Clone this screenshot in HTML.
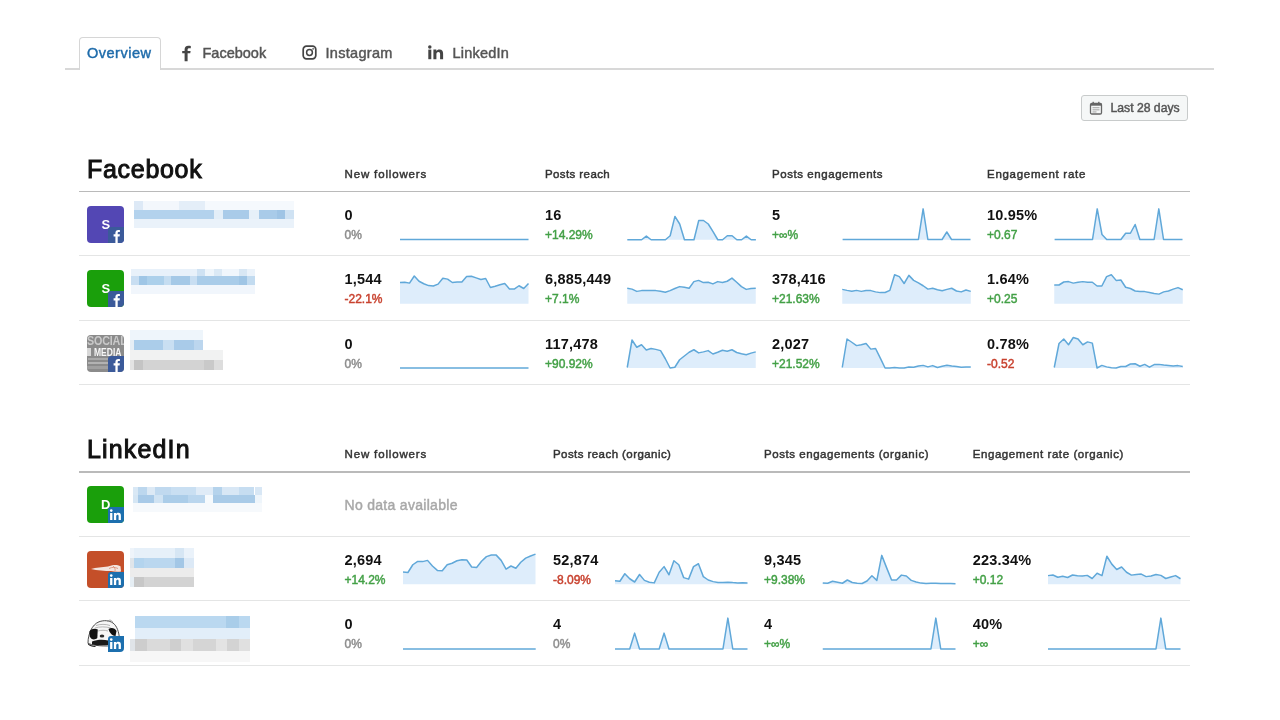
<!DOCTYPE html><html><head><meta charset="utf-8"><style>html,body{margin:0;padding:0;background:#fff;width:1280px;height:720px;overflow:hidden;position:relative;font-family:"Liberation Sans", sans-serif}#w{position:absolute;left:0;top:0;width:1280px;height:720px;will-change:transform}</style></head><body><div id="w">
<div style="position:absolute;left:65px;top:68.25px;width:1149px;height:1.5px;background:#d8d8d8;"></div>
<div style="position:absolute;left:79px;top:37px;width:79.5px;height:32px;border:1.5px solid #d6d6d6;border-bottom:none;border-radius:4px 4px 0 0;background:#fff"></div>
<div style="position:absolute;left:87.00px;top:45.73px;font-size:14.5px;line-height:14.5px;font-weight:400;color:#1f6cab;letter-spacing:0.5px;white-space:nowrap;-webkit-text-stroke:0.45px #1f6cab;">Overview</div>
<svg style="position:absolute;left:180px;top:45px" width="12" height="17" viewBox="0 0 12 17"><path d="M4.6 16.2V8.3H2.2V6.1h2.4V4.6C4.6 2.1 5.9 0.8 8.3 0.8c.9 0 1.9.1 2.5.2v2.3H9.2c-1.1 0-1.6.5-1.6 1.5v1.3h3l-.35 2.2H7.6v7.9z" fill="#454545"/></svg>
<div style="position:absolute;left:202.50px;top:45.73px;font-size:14.5px;line-height:14.5px;font-weight:400;color:#555;letter-spacing:0px;white-space:nowrap;-webkit-text-stroke:0.45px #555;">Facebook</div>
<svg style="position:absolute;left:301.5px;top:45px" width="15" height="15" viewBox="0 0 15 15"><rect x="1.2" y="1.2" width="12.6" height="12.6" rx="3.3" fill="none" stroke="#444" stroke-width="1.7"/><circle cx="7.5" cy="7.5" r="2.9" fill="none" stroke="#444" stroke-width="1.5"/><circle cx="11.1" cy="3.9" r="0.8" fill="#444"/></svg>
<div style="position:absolute;left:325.50px;top:45.73px;font-size:14.5px;line-height:14.5px;font-weight:400;color:#555;letter-spacing:0.3px;white-space:nowrap;-webkit-text-stroke:0.45px #555;">Instagram</div>
<svg style="position:absolute;left:428px;top:45px" width="16" height="15" viewBox="0 0 16 15"><rect x="0.3" y="4.6" width="3" height="9.6" fill="#444"/><circle cx="1.8" cy="1.9" r="1.75" fill="#444"/><path d="M5.4 4.6h2.9v1.4C8.8 5.1 10 4.4 11.5 4.4c2.8 0 3.6 1.8 3.6 4.3v5.5h-3V9.3c0-1.2-.2-2.4-1.7-2.4s-2 1.1-2 2.4v4.9h-3z" fill="#444"/></svg>
<div style="position:absolute;left:452.50px;top:45.73px;font-size:14.5px;line-height:14.5px;font-weight:400;color:#555;letter-spacing:0.2px;white-space:nowrap;-webkit-text-stroke:0.45px #555;">LinkedIn</div>
<div style="position:absolute;left:1081px;top:95px;width:105px;height:23.5px;border:1.5px solid #c8cbcb;border-radius:3px;background:#f5f7f7"></div>
<svg style="position:absolute;left:1089px;top:101px" width="14" height="14" viewBox="0 0 14 14"><rect x="1.5" y="2.5" width="11" height="10.5" rx="1.3" fill="none" stroke="#666" stroke-width="1.3"/><rect x="1.5" y="2.5" width="11" height="2.2" fill="#666"/><rect x="3.5" y="0.8" width="1.4" height="2.6" fill="#666"/><rect x="9.1" y="0.8" width="1.4" height="2.6" fill="#666"/><rect x="3.5" y="6.3" width="7" height="0.9" fill="#999"/><rect x="3.5" y="8.4" width="7" height="0.9" fill="#999"/><rect x="3.5" y="10.5" width="4" height="0.9" fill="#999"/></svg>
<div style="position:absolute;left:1110.50px;top:102.17px;font-size:12.2px;line-height:12.2px;font-weight:400;color:#555;letter-spacing:0px;white-space:nowrap;-webkit-text-stroke:0.45px #555;">Last 28 days</div>
<div style="position:absolute;left:87.00px;top:157.34px;font-size:25px;line-height:25px;font-weight:500;color:#111;letter-spacing:0.7px;white-space:nowrap;-webkit-text-stroke:1.0px #111;">Facebook</div>
<div style="position:absolute;left:79px;top:190.75px;width:1111px;height:1.5px;background:#bababa;"></div>
<div style="position:absolute;left:344.50px;top:168.87px;font-size:11.5px;line-height:11.5px;font-weight:400;color:#333;letter-spacing:0.85px;white-space:nowrap;-webkit-text-stroke:0.45px #333;">New followers</div>
<div style="position:absolute;left:545.00px;top:168.87px;font-size:11.5px;line-height:11.5px;font-weight:400;color:#333;letter-spacing:0.4px;white-space:nowrap;-webkit-text-stroke:0.45px #333;">Posts reach</div>
<div style="position:absolute;left:772.00px;top:168.87px;font-size:11.5px;line-height:11.5px;font-weight:400;color:#333;letter-spacing:0.56px;white-space:nowrap;-webkit-text-stroke:0.45px #333;">Posts engagements</div>
<div style="position:absolute;left:987.00px;top:168.87px;font-size:11.5px;line-height:11.5px;font-weight:400;color:#333;letter-spacing:0.72px;white-space:nowrap;-webkit-text-stroke:0.45px #333;">Engagement rate</div>
<div style="position:absolute;left:87.00px;top:437.24px;font-size:25px;line-height:25px;font-weight:500;color:#111;letter-spacing:1.15px;white-space:nowrap;-webkit-text-stroke:1.0px #111;">LinkedIn</div>
<div style="position:absolute;left:79px;top:471.25px;width:1111px;height:1.5px;background:#bababa;"></div>
<div style="position:absolute;left:344.50px;top:449.02px;font-size:11.5px;line-height:11.5px;font-weight:400;color:#333;letter-spacing:0.85px;white-space:nowrap;-webkit-text-stroke:0.45px #333;">New followers</div>
<div style="position:absolute;left:553.00px;top:449.02px;font-size:11.5px;line-height:11.5px;font-weight:400;color:#333;letter-spacing:0.43px;white-space:nowrap;-webkit-text-stroke:0.45px #333;">Posts reach (organic)</div>
<div style="position:absolute;left:764.00px;top:449.02px;font-size:11.5px;line-height:11.5px;font-weight:400;color:#333;letter-spacing:0.55px;white-space:nowrap;-webkit-text-stroke:0.45px #333;">Posts engagements (organic)</div>
<div style="position:absolute;left:972.70px;top:449.02px;font-size:11.5px;line-height:11.5px;font-weight:400;color:#333;letter-spacing:0.58px;white-space:nowrap;-webkit-text-stroke:0.45px #333;">Engagement rate (organic)</div>
<div style="position:absolute;left:79px;top:255.3px;width:1111px;height:1.2px;background:#e4e5e5;"></div>
<div style="position:absolute;left:79px;top:319.9px;width:1111px;height:1.2px;background:#e4e5e5;"></div>
<div style="position:absolute;left:79px;top:383.9px;width:1111px;height:1.2px;background:#e4e5e5;"></div>
<div style="position:absolute;left:79px;top:535.65px;width:1111px;height:1.2px;background:#e4e5e5;"></div>
<div style="position:absolute;left:79px;top:599.9px;width:1111px;height:1.2px;background:#e4e5e5;"></div>
<div style="position:absolute;left:79px;top:664.6px;width:1111px;height:1.2px;background:#e4e5e5;"></div>
<div style="position:absolute;left:344.50px;top:207.93px;font-size:14.5px;line-height:14.5px;font-weight:700;color:#111;letter-spacing:0.2px;white-space:nowrap;">0</div>
<div style="position:absolute;left:344.50px;top:228.94px;font-size:12px;line-height:12px;font-weight:400;color:#8c8c8c;letter-spacing:0px;white-space:nowrap;-webkit-text-stroke:0.45px #8c8c8c;">0%</div>
<div style="position:absolute;left:545.00px;top:207.93px;font-size:14.5px;line-height:14.5px;font-weight:700;color:#111;letter-spacing:0.2px;white-space:nowrap;">16</div>
<div style="position:absolute;left:545.00px;top:228.94px;font-size:12px;line-height:12px;font-weight:400;color:#43a046;letter-spacing:0px;white-space:nowrap;-webkit-text-stroke:0.45px #43a046;">+14.29%</div>
<div style="position:absolute;left:772.00px;top:207.93px;font-size:14.5px;line-height:14.5px;font-weight:700;color:#111;letter-spacing:0.2px;white-space:nowrap;">5</div>
<div style="position:absolute;left:772.00px;top:228.94px;font-size:12px;line-height:12px;font-weight:400;color:#43a046;letter-spacing:0px;white-space:nowrap;-webkit-text-stroke:0.45px #43a046;">+∞%</div>
<div style="position:absolute;left:987.00px;top:207.93px;font-size:14.5px;line-height:14.5px;font-weight:700;color:#111;letter-spacing:0.2px;white-space:nowrap;">10.95%</div>
<div style="position:absolute;left:987.00px;top:228.94px;font-size:12px;line-height:12px;font-weight:400;color:#43a046;letter-spacing:0px;white-space:nowrap;-webkit-text-stroke:0.45px #43a046;">+0.67</div>
<div style="position:absolute;left:344.50px;top:272.43px;font-size:14.5px;line-height:14.5px;font-weight:700;color:#111;letter-spacing:0.2px;white-space:nowrap;">1,544</div>
<div style="position:absolute;left:344.50px;top:293.44px;font-size:12px;line-height:12px;font-weight:400;color:#c8412e;letter-spacing:0px;white-space:nowrap;-webkit-text-stroke:0.45px #c8412e;">-22.1%</div>
<div style="position:absolute;left:545.00px;top:272.43px;font-size:14.5px;line-height:14.5px;font-weight:700;color:#111;letter-spacing:0.2px;white-space:nowrap;">6,885,449</div>
<div style="position:absolute;left:545.00px;top:293.44px;font-size:12px;line-height:12px;font-weight:400;color:#43a046;letter-spacing:0px;white-space:nowrap;-webkit-text-stroke:0.45px #43a046;">+7.1%</div>
<div style="position:absolute;left:772.00px;top:272.43px;font-size:14.5px;line-height:14.5px;font-weight:700;color:#111;letter-spacing:0.2px;white-space:nowrap;">378,416</div>
<div style="position:absolute;left:772.00px;top:293.44px;font-size:12px;line-height:12px;font-weight:400;color:#43a046;letter-spacing:0px;white-space:nowrap;-webkit-text-stroke:0.45px #43a046;">+21.63%</div>
<div style="position:absolute;left:987.00px;top:272.43px;font-size:14.5px;line-height:14.5px;font-weight:700;color:#111;letter-spacing:0.2px;white-space:nowrap;">1.64%</div>
<div style="position:absolute;left:987.00px;top:293.44px;font-size:12px;line-height:12px;font-weight:400;color:#43a046;letter-spacing:0px;white-space:nowrap;-webkit-text-stroke:0.45px #43a046;">+0.25</div>
<div style="position:absolute;left:344.50px;top:336.93px;font-size:14.5px;line-height:14.5px;font-weight:700;color:#111;letter-spacing:0.2px;white-space:nowrap;">0</div>
<div style="position:absolute;left:344.50px;top:357.94px;font-size:12px;line-height:12px;font-weight:400;color:#8c8c8c;letter-spacing:0px;white-space:nowrap;-webkit-text-stroke:0.45px #8c8c8c;">0%</div>
<div style="position:absolute;left:545.00px;top:336.93px;font-size:14.5px;line-height:14.5px;font-weight:700;color:#111;letter-spacing:0.2px;white-space:nowrap;">117,478</div>
<div style="position:absolute;left:545.00px;top:357.94px;font-size:12px;line-height:12px;font-weight:400;color:#43a046;letter-spacing:0px;white-space:nowrap;-webkit-text-stroke:0.45px #43a046;">+90.92%</div>
<div style="position:absolute;left:772.00px;top:336.93px;font-size:14.5px;line-height:14.5px;font-weight:700;color:#111;letter-spacing:0.2px;white-space:nowrap;">2,027</div>
<div style="position:absolute;left:772.00px;top:357.94px;font-size:12px;line-height:12px;font-weight:400;color:#43a046;letter-spacing:0px;white-space:nowrap;-webkit-text-stroke:0.45px #43a046;">+21.52%</div>
<div style="position:absolute;left:987.00px;top:336.93px;font-size:14.5px;line-height:14.5px;font-weight:700;color:#111;letter-spacing:0.2px;white-space:nowrap;">0.78%</div>
<div style="position:absolute;left:987.00px;top:357.94px;font-size:12px;line-height:12px;font-weight:400;color:#c8412e;letter-spacing:0px;white-space:nowrap;-webkit-text-stroke:0.45px #c8412e;">-0.52</div>
<div style="position:absolute;left:344.50px;top:497.85px;font-size:14px;line-height:14px;font-weight:400;color:#a8a8a8;letter-spacing:0.3px;white-space:nowrap;-webkit-text-stroke:0.45px #a8a8a8;">No data available</div>
<div style="position:absolute;left:344.50px;top:552.68px;font-size:14.5px;line-height:14.5px;font-weight:700;color:#111;letter-spacing:0.2px;white-space:nowrap;">2,694</div>
<div style="position:absolute;left:344.50px;top:573.69px;font-size:12px;line-height:12px;font-weight:400;color:#43a046;letter-spacing:0px;white-space:nowrap;-webkit-text-stroke:0.45px #43a046;">+14.2%</div>
<div style="position:absolute;left:553.00px;top:552.68px;font-size:14.5px;line-height:14.5px;font-weight:700;color:#111;letter-spacing:0.2px;white-space:nowrap;">52,874</div>
<div style="position:absolute;left:553.00px;top:573.69px;font-size:12px;line-height:12px;font-weight:400;color:#c8412e;letter-spacing:0px;white-space:nowrap;-webkit-text-stroke:0.45px #c8412e;">-8.09%</div>
<div style="position:absolute;left:764.00px;top:552.68px;font-size:14.5px;line-height:14.5px;font-weight:700;color:#111;letter-spacing:0.2px;white-space:nowrap;">9,345</div>
<div style="position:absolute;left:764.00px;top:573.69px;font-size:12px;line-height:12px;font-weight:400;color:#43a046;letter-spacing:0px;white-space:nowrap;-webkit-text-stroke:0.45px #43a046;">+9.38%</div>
<div style="position:absolute;left:972.70px;top:552.68px;font-size:14.5px;line-height:14.5px;font-weight:700;color:#111;letter-spacing:0.2px;white-space:nowrap;">223.34%</div>
<div style="position:absolute;left:972.70px;top:573.69px;font-size:12px;line-height:12px;font-weight:400;color:#43a046;letter-spacing:0px;white-space:nowrap;-webkit-text-stroke:0.45px #43a046;">+0.12</div>
<div style="position:absolute;left:344.50px;top:617.18px;font-size:14.5px;line-height:14.5px;font-weight:700;color:#111;letter-spacing:0.2px;white-space:nowrap;">0</div>
<div style="position:absolute;left:344.50px;top:638.19px;font-size:12px;line-height:12px;font-weight:400;color:#8c8c8c;letter-spacing:0px;white-space:nowrap;-webkit-text-stroke:0.45px #8c8c8c;">0%</div>
<div style="position:absolute;left:553.00px;top:617.18px;font-size:14.5px;line-height:14.5px;font-weight:700;color:#111;letter-spacing:0.2px;white-space:nowrap;">4</div>
<div style="position:absolute;left:553.00px;top:638.19px;font-size:12px;line-height:12px;font-weight:400;color:#8c8c8c;letter-spacing:0px;white-space:nowrap;-webkit-text-stroke:0.45px #8c8c8c;">0%</div>
<div style="position:absolute;left:764.00px;top:617.18px;font-size:14.5px;line-height:14.5px;font-weight:700;color:#111;letter-spacing:0.2px;white-space:nowrap;">4</div>
<div style="position:absolute;left:764.00px;top:638.19px;font-size:12px;line-height:12px;font-weight:400;color:#43a046;letter-spacing:0px;white-space:nowrap;-webkit-text-stroke:0.45px #43a046;">+∞%</div>
<div style="position:absolute;left:972.70px;top:617.18px;font-size:14.5px;line-height:14.5px;font-weight:700;color:#111;letter-spacing:0.2px;white-space:nowrap;">40%</div>
<div style="position:absolute;left:972.70px;top:638.19px;font-size:12px;line-height:12px;font-weight:400;color:#43a046;letter-spacing:0px;white-space:nowrap;-webkit-text-stroke:0.45px #43a046;">+∞</div>
<svg style="position:absolute;left:0;top:0" width="1280" height="720" viewBox="0 0 1280 720">
<path d="M400.00,239.75 L400.00,239.50 L404.76,239.50 L409.52,239.50 L414.28,239.50 L419.04,239.50 L423.80,239.50 L428.56,239.50 L433.31,239.50 L438.07,239.50 L442.83,239.50 L447.59,239.50 L452.35,239.50 L457.11,239.50 L461.87,239.50 L466.63,239.50 L471.39,239.50 L476.15,239.50 L480.91,239.50 L485.67,239.50 L490.43,239.50 L495.19,239.50 L499.94,239.50 L504.70,239.50 L509.46,239.50 L514.22,239.50 L518.98,239.50 L523.74,239.50 L528.50,239.50 L528.50,239.75 Z" fill="#deedfb"/>
<polyline points="400.00,239.50 404.76,239.50 409.52,239.50 414.28,239.50 419.04,239.50 423.80,239.50 428.56,239.50 433.31,239.50 438.07,239.50 442.83,239.50 447.59,239.50 452.35,239.50 457.11,239.50 461.87,239.50 466.63,239.50 471.39,239.50 476.15,239.50 480.91,239.50 485.67,239.50 490.43,239.50 495.19,239.50 499.94,239.50 504.70,239.50 509.46,239.50 514.22,239.50 518.98,239.50 523.74,239.50 528.50,239.50" fill="none" stroke="#60a8d9" stroke-width="1.5" stroke-linejoin="round"/>
<path d="M627.30,239.75 L627.30,239.75 L632.06,239.75 L636.83,239.75 L641.59,239.75 L646.35,236.10 L651.11,239.75 L655.88,239.75 L660.64,239.75 L665.40,239.75 L670.17,235.74 L674.93,216.41 L679.69,224.02 L684.46,239.75 L689.22,239.75 L693.98,239.75 L698.74,220.51 L703.51,220.51 L708.27,224.02 L713.03,231.64 L717.80,239.75 L722.56,239.75 L727.32,235.74 L732.09,235.74 L736.85,239.75 L741.61,239.75 L746.37,236.10 L751.14,239.75 L755.90,239.75 L755.90,239.75 Z" fill="#deedfb"/>
<polyline points="627.30,239.75 632.06,239.75 636.83,239.75 641.59,239.75 646.35,236.10 651.11,239.75 655.88,239.75 660.64,239.75 665.40,239.75 670.17,235.74 674.93,216.41 679.69,224.02 684.46,239.75 689.22,239.75 693.98,239.75 698.74,220.51 703.51,220.51 708.27,224.02 713.03,231.64 717.80,239.75 722.56,239.75 727.32,235.74 732.09,235.74 736.85,239.75 741.61,239.75 746.37,236.10 751.14,239.75 755.90,239.75" fill="none" stroke="#60a8d9" stroke-width="1.5" stroke-linejoin="round"/>
<path d="M842.60,239.75 L842.60,239.50 L847.34,239.50 L852.07,239.50 L856.81,239.50 L861.55,239.50 L866.29,239.50 L871.02,239.50 L875.76,239.50 L880.50,239.50 L885.23,239.50 L889.97,239.50 L894.71,239.50 L899.44,239.50 L904.18,239.50 L908.92,239.50 L913.66,239.50 L918.39,239.50 L923.13,208.88 L927.87,239.50 L932.60,239.50 L937.34,239.50 L942.08,239.50 L946.81,232.00 L951.55,239.50 L956.29,239.50 L961.03,239.50 L965.76,239.50 L970.50,239.50 L970.50,239.75 Z" fill="#deedfb"/>
<polyline points="842.60,239.50 847.34,239.50 852.07,239.50 856.81,239.50 861.55,239.50 866.29,239.50 871.02,239.50 875.76,239.50 880.50,239.50 885.23,239.50 889.97,239.50 894.71,239.50 899.44,239.50 904.18,239.50 908.92,239.50 913.66,239.50 918.39,239.50 923.13,208.88 927.87,239.50 932.60,239.50 937.34,239.50 942.08,239.50 946.81,232.00 951.55,239.50 956.29,239.50 961.03,239.50 965.76,239.50 970.50,239.50" fill="none" stroke="#60a8d9" stroke-width="1.5" stroke-linejoin="round"/>
<path d="M1054.60,239.75 L1054.60,239.50 L1059.34,239.50 L1064.07,239.50 L1068.81,239.50 L1073.55,239.50 L1078.29,239.50 L1083.02,239.50 L1087.76,239.50 L1092.50,239.50 L1097.23,208.88 L1101.97,234.50 L1106.71,239.50 L1111.44,239.50 L1116.18,239.50 L1120.92,239.50 L1125.66,233.25 L1130.39,233.25 L1135.13,224.50 L1139.87,239.50 L1144.60,239.50 L1149.34,239.50 L1154.08,239.50 L1158.81,208.88 L1163.55,239.50 L1168.29,239.50 L1173.03,239.50 L1177.76,239.50 L1182.50,239.50 L1182.50,239.75 Z" fill="#deedfb"/>
<polyline points="1054.60,239.50 1059.34,239.50 1064.07,239.50 1068.81,239.50 1073.55,239.50 1078.29,239.50 1083.02,239.50 1087.76,239.50 1092.50,239.50 1097.23,208.88 1101.97,234.50 1106.71,239.50 1111.44,239.50 1116.18,239.50 1120.92,239.50 1125.66,233.25 1130.39,233.25 1135.13,224.50 1139.87,239.50 1144.60,239.50 1149.34,239.50 1154.08,239.50 1158.81,208.88 1163.55,239.50 1168.29,239.50 1173.03,239.50 1177.76,239.50 1182.50,239.50" fill="none" stroke="#60a8d9" stroke-width="1.5" stroke-linejoin="round"/>
<path d="M400.00,303.75 L400.00,282.50 L404.76,282.25 L409.52,283.12 L414.28,276.00 L419.04,281.25 L423.80,283.75 L428.56,285.62 L433.31,286.00 L438.07,284.12 L442.83,278.25 L447.59,279.12 L452.35,282.50 L457.11,282.00 L461.87,282.00 L466.63,276.62 L471.39,276.25 L476.15,277.88 L480.91,279.50 L485.67,278.50 L490.43,287.50 L495.19,286.25 L499.94,284.75 L504.70,283.50 L509.46,288.88 L514.22,289.12 L518.98,285.75 L523.74,288.50 L528.50,283.50 L528.50,303.75 Z" fill="#deedfb"/>
<polyline points="400.00,282.50 404.76,282.25 409.52,283.12 414.28,276.00 419.04,281.25 423.80,283.75 428.56,285.62 433.31,286.00 438.07,284.12 442.83,278.25 447.59,279.12 452.35,282.50 457.11,282.00 461.87,282.00 466.63,276.62 471.39,276.25 476.15,277.88 480.91,279.50 485.67,278.50 490.43,287.50 495.19,286.25 499.94,284.75 504.70,283.50 509.46,288.88 514.22,289.12 518.98,285.75 523.74,288.50 528.50,283.50" fill="none" stroke="#60a8d9" stroke-width="1.5" stroke-linejoin="round"/>
<path d="M627.25,303.75 L627.25,288.25 L632.01,289.12 L636.77,291.38 L641.53,290.62 L646.29,290.62 L651.05,290.62 L655.81,290.62 L660.56,291.25 L665.32,292.25 L670.08,290.62 L674.84,288.50 L679.60,286.62 L684.36,287.25 L689.12,288.25 L693.88,281.62 L698.64,280.38 L703.40,282.62 L708.16,282.25 L712.92,283.88 L717.68,281.62 L722.44,282.50 L727.19,281.25 L731.95,278.12 L736.71,282.25 L741.47,286.62 L746.23,289.38 L750.99,288.50 L755.75,288.25 L755.75,303.75 Z" fill="#deedfb"/>
<polyline points="627.25,288.25 632.01,289.12 636.77,291.38 641.53,290.62 646.29,290.62 651.05,290.62 655.81,290.62 660.56,291.25 665.32,292.25 670.08,290.62 674.84,288.50 679.60,286.62 684.36,287.25 689.12,288.25 693.88,281.62 698.64,280.38 703.40,282.62 708.16,282.25 712.92,283.88 717.68,281.62 722.44,282.50 727.19,281.25 731.95,278.12 736.71,282.25 741.47,286.62 746.23,289.38 750.99,288.50 755.75,288.25" fill="none" stroke="#60a8d9" stroke-width="1.5" stroke-linejoin="round"/>
<path d="M842.25,303.75 L842.25,289.38 L847.01,290.38 L851.77,291.25 L856.53,290.38 L861.29,291.38 L866.05,290.50 L870.81,290.62 L875.56,291.88 L880.32,292.62 L885.08,292.50 L889.84,290.38 L894.60,274.75 L899.36,276.62 L904.12,283.50 L908.88,275.38 L913.64,280.38 L918.40,282.88 L923.16,285.75 L927.92,289.12 L932.68,288.25 L937.44,289.75 L942.19,290.75 L946.95,289.38 L951.71,288.25 L956.47,291.00 L961.23,291.88 L965.99,290.00 L970.75,291.38 L970.75,303.75 Z" fill="#deedfb"/>
<polyline points="842.25,289.38 847.01,290.38 851.77,291.25 856.53,290.38 861.29,291.38 866.05,290.50 870.81,290.62 875.56,291.88 880.32,292.62 885.08,292.50 889.84,290.38 894.60,274.75 899.36,276.62 904.12,283.50 908.88,275.38 913.64,280.38 918.40,282.88 923.16,285.75 927.92,289.12 932.68,288.25 937.44,289.75 942.19,290.75 946.95,289.38 951.71,288.25 956.47,291.00 961.23,291.88 965.99,290.00 970.75,291.38" fill="none" stroke="#60a8d9" stroke-width="1.5" stroke-linejoin="round"/>
<path d="M1054.25,303.75 L1054.25,285.00 L1059.01,285.00 L1063.77,282.00 L1068.53,281.62 L1073.29,283.12 L1078.05,282.25 L1082.81,281.62 L1087.56,282.25 L1092.32,282.25 L1097.08,286.00 L1101.84,286.00 L1106.60,276.62 L1111.36,274.75 L1116.12,280.38 L1120.88,280.00 L1125.64,287.25 L1130.40,288.50 L1135.16,291.00 L1139.92,291.38 L1144.68,291.62 L1149.44,292.50 L1154.19,293.50 L1158.95,294.12 L1163.71,291.88 L1168.47,291.00 L1173.23,289.12 L1177.99,287.62 L1182.75,289.75 L1182.75,303.75 Z" fill="#deedfb"/>
<polyline points="1054.25,285.00 1059.01,285.00 1063.77,282.00 1068.53,281.62 1073.29,283.12 1078.05,282.25 1082.81,281.62 1087.56,282.25 1092.32,282.25 1097.08,286.00 1101.84,286.00 1106.60,276.62 1111.36,274.75 1116.12,280.38 1120.88,280.00 1125.64,287.25 1130.40,288.50 1135.16,291.00 1139.92,291.38 1144.68,291.62 1149.44,292.50 1154.19,293.50 1158.95,294.12 1163.71,291.88 1168.47,291.00 1173.23,289.12 1177.99,287.62 1182.75,289.75" fill="none" stroke="#60a8d9" stroke-width="1.5" stroke-linejoin="round"/>
<path d="M400.00,368.00 L400.00,367.88 L404.76,367.88 L409.52,367.88 L414.28,367.88 L419.04,367.88 L423.80,367.88 L428.56,367.88 L433.31,367.88 L438.07,367.88 L442.83,367.88 L447.59,367.88 L452.35,367.88 L457.11,367.88 L461.87,367.88 L466.63,367.88 L471.39,367.88 L476.15,367.88 L480.91,367.88 L485.67,367.88 L490.43,367.88 L495.19,367.88 L499.94,367.88 L504.70,367.88 L509.46,367.88 L514.22,367.88 L518.98,367.88 L523.74,367.88 L528.50,367.88 L528.50,368.00 Z" fill="#deedfb"/>
<polyline points="400.00,367.88 404.76,367.88 409.52,367.88 414.28,367.88 419.04,367.88 423.80,367.88 428.56,367.88 433.31,367.88 438.07,367.88 442.83,367.88 447.59,367.88 452.35,367.88 457.11,367.88 461.87,367.88 466.63,367.88 471.39,367.88 476.15,367.88 480.91,367.88 485.67,367.88 490.43,367.88 495.19,367.88 499.94,367.88 504.70,367.88 509.46,367.88 514.22,367.88 518.98,367.88 523.74,367.88 528.50,367.88" fill="none" stroke="#60a8d9" stroke-width="1.5" stroke-linejoin="round"/>
<path d="M627.25,368.00 L627.25,367.50 L632.01,340.00 L636.77,347.25 L641.53,344.75 L646.29,350.00 L651.05,348.50 L655.81,349.38 L660.56,350.62 L665.32,358.75 L670.08,368.00 L674.84,367.25 L679.60,359.75 L684.36,356.00 L689.12,352.25 L693.88,349.75 L698.64,352.88 L703.40,351.88 L708.16,350.62 L712.92,354.00 L717.68,352.25 L722.44,350.25 L727.19,351.25 L731.95,349.75 L736.71,352.50 L741.47,353.75 L746.23,354.75 L750.99,353.12 L755.75,351.88 L755.75,368.00 Z" fill="#deedfb"/>
<polyline points="627.25,367.50 632.01,340.00 636.77,347.25 641.53,344.75 646.29,350.00 651.05,348.50 655.81,349.38 660.56,350.62 665.32,358.75 670.08,368.00 674.84,367.25 679.60,359.75 684.36,356.00 689.12,352.25 693.88,349.75 698.64,352.88 703.40,351.88 708.16,350.62 712.92,354.00 717.68,352.25 722.44,350.25 727.19,351.25 731.95,349.75 736.71,352.50 741.47,353.75 746.23,354.75 750.99,353.12 755.75,351.88" fill="none" stroke="#60a8d9" stroke-width="1.5" stroke-linejoin="round"/>
<path d="M842.25,368.00 L842.25,367.50 L847.01,339.00 L851.77,342.25 L856.53,345.62 L861.29,344.75 L866.05,343.50 L870.81,349.12 L875.56,348.50 L880.32,358.12 L885.08,368.00 L889.84,367.88 L894.60,367.50 L899.36,367.88 L904.12,368.00 L908.88,367.00 L913.64,367.25 L918.40,366.00 L923.16,365.38 L927.92,366.88 L932.68,365.62 L937.44,367.50 L942.19,366.25 L946.95,365.25 L951.71,366.00 L956.47,366.50 L961.23,367.25 L965.99,366.88 L970.75,367.12 L970.75,368.00 Z" fill="#deedfb"/>
<polyline points="842.25,367.50 847.01,339.00 851.77,342.25 856.53,345.62 861.29,344.75 866.05,343.50 870.81,349.12 875.56,348.50 880.32,358.12 885.08,368.00 889.84,367.88 894.60,367.50 899.36,367.88 904.12,368.00 908.88,367.00 913.64,367.25 918.40,366.00 923.16,365.38 927.92,366.88 932.68,365.62 937.44,367.50 942.19,366.25 946.95,365.25 951.71,366.00 956.47,366.50 961.23,367.25 965.99,366.88 970.75,367.12" fill="none" stroke="#60a8d9" stroke-width="1.5" stroke-linejoin="round"/>
<path d="M1054.25,368.00 L1054.25,367.50 L1059.01,343.50 L1063.77,339.00 L1068.53,344.75 L1073.29,337.50 L1078.05,339.00 L1082.81,344.75 L1087.56,341.88 L1092.32,343.12 L1097.08,368.00 L1101.84,365.38 L1106.60,366.88 L1111.36,367.75 L1116.12,368.00 L1120.88,366.50 L1125.64,366.50 L1130.40,364.00 L1135.16,363.75 L1139.92,366.25 L1144.68,364.38 L1149.44,367.12 L1154.19,364.62 L1158.95,364.38 L1163.71,365.00 L1168.47,365.38 L1173.23,365.88 L1177.99,365.62 L1182.75,366.50 L1182.75,368.00 Z" fill="#deedfb"/>
<polyline points="1054.25,367.50 1059.01,343.50 1063.77,339.00 1068.53,344.75 1073.29,337.50 1078.05,339.00 1082.81,344.75 1087.56,341.88 1092.32,343.12 1097.08,368.00 1101.84,365.38 1106.60,366.88 1111.36,367.75 1116.12,368.00 1120.88,366.50 1125.64,366.50 1130.40,364.00 1135.16,363.75 1139.92,366.25 1144.68,364.38 1149.44,367.12 1154.19,364.62 1158.95,364.38 1163.71,365.00 1168.47,365.38 1173.23,365.88 1177.99,365.62 1182.75,366.50" fill="none" stroke="#60a8d9" stroke-width="1.5" stroke-linejoin="round"/>
<path d="M403.00,584.25 L403.00,572.00 L407.91,572.50 L412.81,564.75 L417.72,561.38 L422.63,561.62 L427.54,560.38 L432.44,566.00 L437.35,570.38 L442.26,570.75 L447.17,564.75 L452.07,563.25 L456.98,560.75 L461.89,559.75 L466.80,560.00 L471.70,567.00 L476.61,567.50 L481.52,561.25 L486.43,556.62 L491.33,555.00 L496.24,555.12 L501.15,560.38 L506.06,569.12 L510.96,566.00 L515.87,568.25 L520.78,562.25 L525.69,558.12 L530.59,556.00 L535.50,554.12 L535.50,584.25 Z" fill="#deedfb"/>
<polyline points="403.00,572.00 407.91,572.50 412.81,564.75 417.72,561.38 422.63,561.62 427.54,560.38 432.44,566.00 437.35,570.38 442.26,570.75 447.17,564.75 452.07,563.25 456.98,560.75 461.89,559.75 466.80,560.00 471.70,567.00 476.61,567.50 481.52,561.25 486.43,556.62 491.33,555.00 496.24,555.12 501.15,560.38 506.06,569.12 510.96,566.00 515.87,568.25 520.78,562.25 525.69,558.12 530.59,556.00 535.50,554.12" fill="none" stroke="#60a8d9" stroke-width="1.5" stroke-linejoin="round"/>
<path d="M615.00,584.25 L615.00,580.75 L619.91,581.25 L624.81,573.75 L629.72,578.75 L634.63,582.00 L639.54,574.50 L644.44,580.38 L649.35,582.25 L654.26,582.88 L659.17,572.25 L664.07,566.62 L668.98,574.75 L673.89,560.75 L678.80,564.75 L683.70,577.62 L688.61,579.12 L693.52,566.62 L698.43,563.75 L703.33,576.62 L708.24,580.00 L713.15,581.62 L718.06,582.50 L722.96,582.50 L727.87,582.25 L732.78,582.62 L737.69,582.88 L742.59,582.75 L747.50,583.00 L747.50,584.25 Z" fill="#deedfb"/>
<polyline points="615.00,580.75 619.91,581.25 624.81,573.75 629.72,578.75 634.63,582.00 639.54,574.50 644.44,580.38 649.35,582.25 654.26,582.88 659.17,572.25 664.07,566.62 668.98,574.75 673.89,560.75 678.80,564.75 683.70,577.62 688.61,579.12 693.52,566.62 698.43,563.75 703.33,576.62 708.24,580.00 713.15,581.62 718.06,582.50 722.96,582.50 727.87,582.25 732.78,582.62 737.69,582.88 742.59,582.75 747.50,583.00" fill="none" stroke="#60a8d9" stroke-width="1.5" stroke-linejoin="round"/>
<path d="M822.75,584.25 L822.75,582.88 L827.67,583.25 L832.58,581.25 L837.50,582.25 L842.42,583.25 L847.33,580.00 L852.25,582.50 L857.17,583.25 L862.08,583.50 L867.00,581.00 L871.92,575.75 L876.83,580.38 L881.75,555.38 L886.67,567.88 L891.58,580.00 L896.50,580.00 L901.42,575.12 L906.33,576.00 L911.25,580.38 L916.17,582.00 L921.08,583.12 L926.00,583.50 L930.92,583.25 L935.83,583.25 L940.75,583.50 L945.67,583.50 L950.58,583.50 L955.50,583.75 L955.50,584.25 Z" fill="#deedfb"/>
<polyline points="822.75,582.88 827.67,583.25 832.58,581.25 837.50,582.25 842.42,583.25 847.33,580.00 852.25,582.50 857.17,583.25 862.08,583.50 867.00,581.00 871.92,575.75 876.83,580.38 881.75,555.38 886.67,567.88 891.58,580.00 896.50,580.00 901.42,575.12 906.33,576.00 911.25,580.38 916.17,582.00 921.08,583.12 926.00,583.50 930.92,583.25 935.83,583.25 940.75,583.50 945.67,583.50 950.58,583.50 955.50,583.75" fill="none" stroke="#60a8d9" stroke-width="1.5" stroke-linejoin="round"/>
<path d="M1048.00,584.25 L1048.00,575.62 L1052.91,575.00 L1057.81,577.25 L1062.72,576.25 L1067.63,577.50 L1072.54,575.00 L1077.44,575.75 L1082.35,576.00 L1087.26,575.38 L1092.17,578.50 L1097.07,573.25 L1101.98,575.62 L1106.89,556.25 L1111.80,564.12 L1116.70,569.50 L1121.61,567.00 L1126.52,572.25 L1131.43,575.12 L1136.33,574.50 L1141.24,574.12 L1146.15,576.62 L1151.06,576.00 L1155.96,574.50 L1160.87,575.38 L1165.78,578.50 L1170.69,577.00 L1175.59,575.62 L1180.50,578.75 L1180.50,584.25 Z" fill="#deedfb"/>
<polyline points="1048.00,575.62 1052.91,575.00 1057.81,577.25 1062.72,576.25 1067.63,577.50 1072.54,575.00 1077.44,575.75 1082.35,576.00 1087.26,575.38 1092.17,578.50 1097.07,573.25 1101.98,575.62 1106.89,556.25 1111.80,564.12 1116.70,569.50 1121.61,567.00 1126.52,572.25 1131.43,575.12 1136.33,574.50 1141.24,574.12 1146.15,576.62 1151.06,576.00 1155.96,574.50 1160.87,575.38 1165.78,578.50 1170.69,577.00 1175.59,575.62 1180.50,578.75" fill="none" stroke="#60a8d9" stroke-width="1.5" stroke-linejoin="round"/>
<path d="M403.00,649.00 L403.00,649.00 L407.91,649.00 L412.83,649.00 L417.74,649.00 L422.66,649.00 L427.57,649.00 L432.49,649.00 L437.40,649.00 L442.32,649.00 L447.23,649.00 L452.15,649.00 L457.06,649.00 L461.98,649.00 L466.89,649.00 L471.81,649.00 L476.72,649.00 L481.64,649.00 L486.55,649.00 L491.47,649.00 L496.38,649.00 L501.30,649.00 L506.21,649.00 L511.13,649.00 L516.04,649.00 L520.96,649.00 L525.87,649.00 L530.79,649.00 L535.70,649.00 L535.70,649.00 Z" fill="#deedfb"/>
<polyline points="403.00,649.00 407.91,649.00 412.83,649.00 417.74,649.00 422.66,649.00 427.57,649.00 432.49,649.00 437.40,649.00 442.32,649.00 447.23,649.00 452.15,649.00 457.06,649.00 461.98,649.00 466.89,649.00 471.81,649.00 476.72,649.00 481.64,649.00 486.55,649.00 491.47,649.00 496.38,649.00 501.30,649.00 506.21,649.00 511.13,649.00 516.04,649.00 520.96,649.00 525.87,649.00 530.79,649.00 535.70,649.00" fill="none" stroke="#60a8d9" stroke-width="1.5" stroke-linejoin="round"/>
<path d="M615.00,649.00 L615.00,649.00 L619.91,649.00 L624.81,649.00 L629.72,649.00 L634.63,633.12 L639.54,649.00 L644.44,649.00 L649.35,649.00 L654.26,649.00 L659.17,649.00 L664.07,633.12 L668.98,649.00 L673.89,649.00 L678.80,649.00 L683.70,649.00 L688.61,649.00 L693.52,649.00 L698.43,649.00 L703.33,649.00 L708.24,649.00 L713.15,649.00 L718.06,649.00 L722.96,649.00 L727.87,618.12 L732.78,649.00 L737.69,649.00 L742.59,649.00 L747.50,649.00 L747.50,649.00 Z" fill="#deedfb"/>
<polyline points="615.00,649.00 619.91,649.00 624.81,649.00 629.72,649.00 634.63,633.12 639.54,649.00 644.44,649.00 649.35,649.00 654.26,649.00 659.17,649.00 664.07,633.12 668.98,649.00 673.89,649.00 678.80,649.00 683.70,649.00 688.61,649.00 693.52,649.00 698.43,649.00 703.33,649.00 708.24,649.00 713.15,649.00 718.06,649.00 722.96,649.00 727.87,618.12 732.78,649.00 737.69,649.00 742.59,649.00 747.50,649.00" fill="none" stroke="#60a8d9" stroke-width="1.5" stroke-linejoin="round"/>
<path d="M822.75,649.00 L822.75,649.00 L827.67,649.00 L832.58,649.00 L837.50,649.00 L842.42,649.00 L847.33,649.00 L852.25,649.00 L857.17,649.00 L862.08,649.00 L867.00,649.00 L871.92,649.00 L876.83,649.00 L881.75,649.00 L886.67,649.00 L891.58,649.00 L896.50,649.00 L901.42,649.00 L906.33,649.00 L911.25,649.00 L916.17,649.00 L921.08,649.00 L926.00,649.00 L930.92,649.00 L935.83,618.12 L940.75,649.00 L945.67,649.00 L950.58,649.00 L955.50,649.00 L955.50,649.00 Z" fill="#deedfb"/>
<polyline points="822.75,649.00 827.67,649.00 832.58,649.00 837.50,649.00 842.42,649.00 847.33,649.00 852.25,649.00 857.17,649.00 862.08,649.00 867.00,649.00 871.92,649.00 876.83,649.00 881.75,649.00 886.67,649.00 891.58,649.00 896.50,649.00 901.42,649.00 906.33,649.00 911.25,649.00 916.17,649.00 921.08,649.00 926.00,649.00 930.92,649.00 935.83,618.12 940.75,649.00 945.67,649.00 950.58,649.00 955.50,649.00" fill="none" stroke="#60a8d9" stroke-width="1.5" stroke-linejoin="round"/>
<path d="M1048.00,649.00 L1048.00,649.00 L1052.91,649.00 L1057.81,649.00 L1062.72,649.00 L1067.63,649.00 L1072.54,649.00 L1077.44,649.00 L1082.35,649.00 L1087.26,649.00 L1092.17,649.00 L1097.07,649.00 L1101.98,649.00 L1106.89,649.00 L1111.80,649.00 L1116.70,649.00 L1121.61,649.00 L1126.52,649.00 L1131.43,649.00 L1136.33,649.00 L1141.24,649.00 L1146.15,649.00 L1151.06,649.00 L1155.96,649.00 L1160.87,618.12 L1165.78,649.00 L1170.69,649.00 L1175.59,649.00 L1180.50,649.00 L1180.50,649.00 Z" fill="#deedfb"/>
<polyline points="1048.00,649.00 1052.91,649.00 1057.81,649.00 1062.72,649.00 1067.63,649.00 1072.54,649.00 1077.44,649.00 1082.35,649.00 1087.26,649.00 1092.17,649.00 1097.07,649.00 1101.98,649.00 1106.89,649.00 1111.80,649.00 1116.70,649.00 1121.61,649.00 1126.52,649.00 1131.43,649.00 1136.33,649.00 1141.24,649.00 1146.15,649.00 1151.06,649.00 1155.96,649.00 1160.87,618.12 1165.78,649.00 1170.69,649.00 1175.59,649.00 1180.50,649.00" fill="none" stroke="#60a8d9" stroke-width="1.5" stroke-linejoin="round"/>
</svg>
<div style="position:absolute;left:87px;top:206px;width:37px;height:37px;background:#5347b4;border-radius:4px"></div>
<div style="position:absolute;left:87px;top:216.5px;width:37.5px;text-align:center;font-size:13px;line-height:15px;font-weight:700;color:#fff">S</div>
<div style="position:absolute;left:108px;top:227px;width:16px;height:16px;background:#3b5a9a;border-radius:3px 0 4px 0"></div><svg style="position:absolute;left:108px;top:227px" width="16" height="16" viewBox="0 0 16 16"><path d="M7.4 16V9.4H5.6V7.3h1.8V5.9c0-2 1.1-3 2.9-3 .8 0 1.4.06 1.6.1v2h-1.1c-.9 0-1.1.45-1.1 1.1v1.2h2.2l-.3 2.1H9.7V16z" fill="#fff"/></svg>
<div style="position:absolute;left:87px;top:270.2px;width:37px;height:37px;background:#1a9f0b;border-radius:4px"></div>
<div style="position:absolute;left:87px;top:280.7px;width:37.5px;text-align:center;font-size:13px;line-height:15px;font-weight:700;color:#fff">S</div>
<div style="position:absolute;left:108px;top:291.2px;width:16px;height:16px;background:#3b5a9a;border-radius:3px 0 4px 0"></div><svg style="position:absolute;left:108px;top:291.2px" width="16" height="16" viewBox="0 0 16 16"><path d="M7.4 16V9.4H5.6V7.3h1.8V5.9c0-2 1.1-3 2.9-3 .8 0 1.4.06 1.6.1v2h-1.1c-.9 0-1.1.45-1.1 1.1v1.2h2.2l-.3 2.1H9.7V16z" fill="#fff"/></svg>
<div style="position:absolute;left:87px;top:334.5px;width:37px;height:37px;background:#8b8b8b;border-radius:4px;overflow:hidden"><div style="position:absolute;left:0;top:0.5px;font-size:12.5px;line-height:12px;font-weight:700;color:#c9c9c9;transform:scaleX(0.86);transform-origin:0 0;letter-spacing:-0.2px">SOCIAL</div><div style="position:absolute;left:0;top:13.5px;width:4px;height:8px;background:#d8d8d8"></div><div style="position:absolute;left:7px;top:12.5px;font-size:11.5px;line-height:11px;font-weight:700;color:#f7f7f7;transform:scaleX(0.74);transform-origin:0 0">MEDIA</div><div style="position:absolute;left:1px;top:23.5px;width:21px;height:2px;background:#a9a9a9"></div><div style="position:absolute;left:1px;top:27px;width:21px;height:2px;background:#b2b2b2"></div><div style="position:absolute;left:0;top:31px;width:21px;height:3px;background:#a0a0a0"></div></div>
<div style="position:absolute;left:108px;top:355.5px;width:16px;height:16px;background:#3b5a9a;border-radius:3px 0 4px 0"></div><svg style="position:absolute;left:108px;top:355.5px" width="16" height="16" viewBox="0 0 16 16"><path d="M7.4 16V9.4H5.6V7.3h1.8V5.9c0-2 1.1-3 2.9-3 .8 0 1.4.06 1.6.1v2h-1.1c-.9 0-1.1.45-1.1 1.1v1.2h2.2l-.3 2.1H9.7V16z" fill="#fff"/></svg>
<div style="position:absolute;left:87px;top:486.3px;width:37px;height:37px;background:#1a9f0b;border-radius:4px"></div>
<div style="position:absolute;left:87px;top:496.8px;width:37.5px;text-align:center;font-size:13px;line-height:15px;font-weight:700;color:#fff">D</div>
<div style="position:absolute;left:108px;top:507.3px;width:16px;height:16px;background:#1c6fae;border-radius:3px 0 4px 0"></div><svg style="position:absolute;left:108px;top:507.3px" width="16" height="16" viewBox="0 0 16 16"><rect x="2.1" y="6" width="2.3" height="7" fill="#fff"/><circle cx="3.25" cy="3.6" r="1.3" fill="#fff"/><path d="M5.9 6h2.2v1c.4-.7 1.2-1.2 2.3-1.2 1.9 0 2.5 1.2 2.5 3v4.2h-2.3V9.3c0-.9-.2-1.5-1-1.5-.9 0-1.4.6-1.4 1.6V13H5.9z" fill="#fff"/></svg>
<div style="position:absolute;left:87px;top:550.5px;width:37px;height:37px;background:#c44f29;border-radius:4px"></div>
<svg style="position:absolute;left:87px;top:550.5px" width="37" height="37" viewBox="0 0 37 37"><path d="M4 18 C9 16.8 15 16 21 15.6 C25 13.6 30 13.2 33.5 15.2 L34 20.5 C31 21.2 27 20.8 24 20 C18 20 10 19.6 4 18z" fill="#f3e5df"/><path d="M22 17.5 C25 16 28 16 31 17.5 M26 15 C27.5 16 28.5 18 28 20" fill="none" stroke="#d98a70" stroke-width="0.8"/></svg>
<div style="position:absolute;left:108px;top:571.5px;width:16px;height:16px;background:#1c6fae;border-radius:3px 0 4px 0"></div><svg style="position:absolute;left:108px;top:571.5px" width="16" height="16" viewBox="0 0 16 16"><rect x="2.1" y="6" width="2.3" height="7" fill="#fff"/><circle cx="3.25" cy="3.6" r="1.3" fill="#fff"/><path d="M5.9 6h2.2v1c.4-.7 1.2-1.2 2.3-1.2 1.9 0 2.5 1.2 2.5 3v4.2h-2.3V9.3c0-.9-.2-1.5-1-1.5-.9 0-1.4.6-1.4 1.6V13H5.9z" fill="#fff"/></svg>
<svg style="position:absolute;left:87px;top:615px" width="37" height="37" viewBox="0 0 37 37"><path d="M1 28 C1 19 5 9.5 12 6.8 C17 5 22 5.3 26 8 C30 11 32 17 32.5 24 L32.5 30 C22 31.5 10 31.5 1 28.5z" fill="#f6f6f6" stroke="#3a3a3a" stroke-width="0.9"/><path d="M9 10.5 C13 9 19 9 23 10.5 M8 13 C12 11.5 19 11.5 24 13 M11 16 C14 15 18 15 21 16" fill="none" stroke="#9a9a9a" stroke-width="0.7"/><path d="M2.5 16.5 C3.5 13.8 8 13 10.8 14.5 L10.3 23 C7.5 25.5 4 24.5 2.8 21.5z" fill="#101010"/><path d="M21.5 14 C24 12.3 28 12.8 29.5 16 L28.5 21 C25.5 21.2 22.5 18 21.5 14z" fill="#101010"/><ellipse cx="15" cy="21" rx="2.3" ry="1.6" fill="#2a2a2a"/><path d="M5 26.5 C10 24.5 16 24.3 21.5 25.5 L21 30 C15 30.5 9 30.5 5 29.5z" fill="#1a1a1a"/><path d="M1 28.5 C3 30 6 30.8 9 31 L8 32 C5 32 2.5 31 1 29.5z" fill="#222"/><path d="M20.5 6.5 C22 4.5 24.5 4.8 25.5 7" fill="none" stroke="#888" stroke-width="0.8"/></svg>
<div style="position:absolute;left:108px;top:636px;width:16px;height:16px;background:#1c6fae;border-radius:3px 0 4px 0"></div><svg style="position:absolute;left:108px;top:636px" width="16" height="16" viewBox="0 0 16 16"><rect x="2.1" y="6" width="2.3" height="7" fill="#fff"/><circle cx="3.25" cy="3.6" r="1.3" fill="#fff"/><path d="M5.9 6h2.2v1c.4-.7 1.2-1.2 2.3-1.2 1.9 0 2.5 1.2 2.5 3v4.2h-2.3V9.3c0-.9-.2-1.5-1-1.5-.9 0-1.4.6-1.4 1.6V13H5.9z" fill="#fff"/></svg>
<div style="position:absolute;left:0;top:0;width:1280px;height:720px;filter:blur(0.5px)"><div style="position:absolute;left:134.14px;top:200.81px;width:9.14px;height:9.14px;background:#dde9f6"></div><div style="position:absolute;left:143.28px;top:200.81px;width:35.86px;height:9.14px;background:#f3f7fc"></div><div style="position:absolute;left:179.15px;top:200.81px;width:26.02px;height:9.14px;background:#e4eef8"></div><div style="position:absolute;left:205.17px;top:200.81px;width:88.61px;height:9.14px;background:#f5f9fd"></div><div style="position:absolute;left:134.14px;top:209.95px;width:80.17px;height:9.14px;background:#b3d2ed"></div><div style="position:absolute;left:214.31px;top:209.95px;width:9.14px;height:9.14px;background:#e3eef8"></div><div style="position:absolute;left:223.45px;top:209.95px;width:26.02px;height:9.14px;background:#a9cbe9"></div><div style="position:absolute;left:249.47px;top:209.95px;width:9.14px;height:9.14px;background:#e6f0f9"></div><div style="position:absolute;left:258.61px;top:209.95px;width:18.28px;height:9.14px;background:#a9cbe9"></div><div style="position:absolute;left:276.90px;top:209.95px;width:8.44px;height:9.14px;background:#9fc4e5"></div><div style="position:absolute;left:285.34px;top:209.95px;width:8.44px;height:9.14px;background:#cfe2f3"></div><div style="position:absolute;left:134.14px;top:219.10px;width:159.63px;height:9.14px;background:#eaf2fa"></div></div>
<div style="position:absolute;left:0;top:0;width:1280px;height:720px;filter:blur(0.5px)"><div style="position:absolute;left:131.02px;top:268.56px;width:65.65px;height:7.66px;background:#e8f1fa"></div><div style="position:absolute;left:196.66px;top:268.56px;width:8.21px;height:7.66px;background:#cfe2f3"></div><div style="position:absolute;left:204.87px;top:268.56px;width:8.75px;height:7.66px;background:#eef5fb"></div><div style="position:absolute;left:213.62px;top:268.56px;width:8.21px;height:7.66px;background:#dbe9f5"></div><div style="position:absolute;left:221.83px;top:268.56px;width:16.96px;height:7.66px;background:#f0f6fc"></div><div style="position:absolute;left:238.79px;top:268.56px;width:8.21px;height:7.66px;background:#d8e7f4"></div><div style="position:absolute;left:246.99px;top:268.56px;width:7.66px;height:7.66px;background:#eaf2fa"></div><div style="position:absolute;left:131.02px;top:276.22px;width:7.66px;height:8.75px;background:#c8def2"></div><div style="position:absolute;left:138.68px;top:276.22px;width:8.75px;height:8.75px;background:#9fc6e6"></div><div style="position:absolute;left:147.43px;top:276.22px;width:16.41px;height:8.75px;background:#acd0eb"></div><div style="position:absolute;left:163.84px;top:276.22px;width:7.11px;height:8.75px;background:#c5ddf1"></div><div style="position:absolute;left:170.95px;top:276.22px;width:18.60px;height:8.75px;background:#a5c9e7"></div><div style="position:absolute;left:189.55px;top:276.22px;width:7.11px;height:8.75px;background:#c8def2"></div><div style="position:absolute;left:196.66px;top:276.22px;width:42.12px;height:8.75px;background:#a9cce9"></div><div style="position:absolute;left:238.79px;top:276.22px;width:8.21px;height:8.75px;background:#9fc5e5"></div><div style="position:absolute;left:246.99px;top:276.22px;width:7.66px;height:8.75px;background:#c2dbf0"></div><div style="position:absolute;left:131.02px;top:284.98px;width:123.63px;height:8.75px;background:#f1f6fc"></div></div>
<div style="position:absolute;left:0;top:0;width:1280px;height:720px;filter:blur(0.5px)"><div style="position:absolute;left:129.73px;top:330.30px;width:73.02px;height:9.88px;background:#eef5fb"></div><div style="position:absolute;left:129.73px;top:340.18px;width:4.30px;height:9.62px;background:#e6eef5"></div><div style="position:absolute;left:134.02px;top:340.18px;width:28.78px;height:9.62px;background:#abcdea"></div><div style="position:absolute;left:162.80px;top:340.18px;width:11.17px;height:9.62px;background:#c9dff2"></div><div style="position:absolute;left:173.97px;top:340.18px;width:19.76px;height:9.62px;background:#a9cbe9"></div><div style="position:absolute;left:193.73px;top:340.18px;width:9.45px;height:9.62px;background:#bcd6ee"></div><div style="position:absolute;left:129.73px;top:349.80px;width:93.64px;height:10.14px;background:#f1f2f2"></div><div style="position:absolute;left:129.73px;top:359.93px;width:4.30px;height:9.62px;background:#e3e3e3"></div><div style="position:absolute;left:134.02px;top:359.93px;width:9.45px;height:9.62px;background:#c4c4c4"></div><div style="position:absolute;left:143.47px;top:359.93px;width:60.14px;height:9.62px;background:#d3d3d3"></div><div style="position:absolute;left:203.61px;top:359.93px;width:10.31px;height:9.62px;background:#c9c9c9"></div><div style="position:absolute;left:213.92px;top:359.93px;width:9.45px;height:9.62px;background:#dddddd"></div></div>
<div style="position:absolute;left:0;top:0;width:1280px;height:720px;filter:blur(0.5px)"><div style="position:absolute;left:132.62px;top:486.79px;width:5.86px;height:8.20px;background:#d9e8f5"></div><div style="position:absolute;left:138.48px;top:486.79px;width:8.20px;height:8.20px;background:#bcd7ee"></div><div style="position:absolute;left:146.68px;top:486.79px;width:8.20px;height:8.20px;background:#dce9f5"></div><div style="position:absolute;left:154.88px;top:486.79px;width:16.41px;height:8.20px;background:#c0d9ef"></div><div style="position:absolute;left:171.29px;top:486.79px;width:25.20px;height:8.20px;background:#c9dff2"></div><div style="position:absolute;left:196.49px;top:486.79px;width:16.41px;height:8.20px;background:#dfebf7"></div><div style="position:absolute;left:212.89px;top:486.79px;width:8.79px;height:8.20px;background:#b5d3ec"></div><div style="position:absolute;left:221.68px;top:486.79px;width:16.99px;height:8.20px;background:#d8e7f5"></div><div style="position:absolute;left:238.68px;top:486.79px;width:15.82px;height:8.20px;background:#c6ddf1"></div><div style="position:absolute;left:254.50px;top:486.79px;width:7.62px;height:8.20px;background:#d8e7f5"></div><div style="position:absolute;left:132.62px;top:494.99px;width:5.86px;height:8.20px;background:#d5e6f4"></div><div style="position:absolute;left:138.48px;top:494.99px;width:15.82px;height:8.20px;background:#a8cae8"></div><div style="position:absolute;left:154.30px;top:494.99px;width:8.79px;height:8.20px;background:#d0e3f3"></div><div style="position:absolute;left:163.09px;top:494.99px;width:25.20px;height:8.20px;background:#abcde9"></div><div style="position:absolute;left:188.28px;top:494.99px;width:16.41px;height:8.20px;background:#bad6ee"></div><div style="position:absolute;left:204.69px;top:494.99px;width:8.79px;height:8.20px;background:#f6fafd"></div><div style="position:absolute;left:213.48px;top:494.99px;width:41.60px;height:8.20px;background:#a9cbe8"></div><div style="position:absolute;left:255.08px;top:494.99px;width:7.03px;height:8.20px;background:#eef5fb"></div><div style="position:absolute;left:132.62px;top:503.20px;width:129.50px;height:8.79px;background:#f6f9fc"></div></div>
<div style="position:absolute;left:0;top:0;width:1280px;height:720px;filter:blur(0.5px)"><div style="position:absolute;left:129.58px;top:548.02px;width:4.58px;height:9.93px;background:#eef4fa"></div><div style="position:absolute;left:134.17px;top:548.02px;width:40.49px;height:9.93px;background:#e6f0f9"></div><div style="position:absolute;left:174.66px;top:548.02px;width:9.17px;height:9.93px;background:#d6e6f4"></div><div style="position:absolute;left:183.82px;top:548.02px;width:9.93px;height:9.93px;background:#eaf2fa"></div><div style="position:absolute;left:129.58px;top:557.95px;width:4.58px;height:9.70px;background:#dfe5ea"></div><div style="position:absolute;left:134.17px;top:557.95px;width:9.93px;height:9.70px;background:#b3d4ee"></div><div style="position:absolute;left:144.10px;top:557.95px;width:30.56px;height:9.70px;background:#bad7ef"></div><div style="position:absolute;left:174.66px;top:557.95px;width:9.17px;height:9.70px;background:#a3c7e6"></div><div style="position:absolute;left:183.82px;top:557.95px;width:9.93px;height:9.70px;background:#dce9f6"></div><div style="position:absolute;left:129.58px;top:567.65px;width:64.17px;height:9.78px;background:#ececec"></div><div style="position:absolute;left:129.58px;top:577.43px;width:4.58px;height:9.93px;background:#e6eef4"></div><div style="position:absolute;left:134.17px;top:577.43px;width:9.55px;height:9.93px;background:#c7c7c7"></div><div style="position:absolute;left:143.72px;top:577.43px;width:50.04px;height:9.93px;background:#d3d3d3"></div></div>
<div style="position:absolute;left:0;top:0;width:1280px;height:720px;filter:blur(0.5px)"><div style="position:absolute;left:135.39px;top:616.49px;width:90.26px;height:11.49px;background:#bad8f0"></div><div style="position:absolute;left:225.66px;top:616.49px;width:13.13px;height:11.49px;background:#a9cde9"></div><div style="position:absolute;left:238.79px;top:616.49px;width:11.49px;height:11.49px;background:#bad8f0"></div><div style="position:absolute;left:135.39px;top:627.98px;width:114.88px;height:11.49px;background:#e2eef9"></div><div style="position:absolute;left:129.92px;top:639.46px;width:5.47px;height:11.16px;background:#e0e4e8"></div><div style="position:absolute;left:135.39px;top:639.46px;width:11.49px;height:11.16px;background:#cdcdcd"></div><div style="position:absolute;left:146.88px;top:639.46px;width:22.98px;height:11.16px;background:#dadada"></div><div style="position:absolute;left:169.86px;top:639.46px;width:11.49px;height:11.16px;background:#cfcfcf"></div><div style="position:absolute;left:181.35px;top:639.46px;width:11.49px;height:11.16px;background:#e0e0e0"></div><div style="position:absolute;left:192.83px;top:639.46px;width:22.98px;height:11.16px;background:#d5d5d5"></div><div style="position:absolute;left:215.81px;top:639.46px;width:11.49px;height:11.16px;background:#e3e3e3"></div><div style="position:absolute;left:227.30px;top:639.46px;width:11.49px;height:11.16px;background:#d3d3d3"></div><div style="position:absolute;left:238.79px;top:639.46px;width:11.49px;height:11.16px;background:#e0e0e0"></div><div style="position:absolute;left:129.92px;top:650.62px;width:120.35px;height:11.27px;background:#f7f7f7"></div></div>
</div></body></html>
